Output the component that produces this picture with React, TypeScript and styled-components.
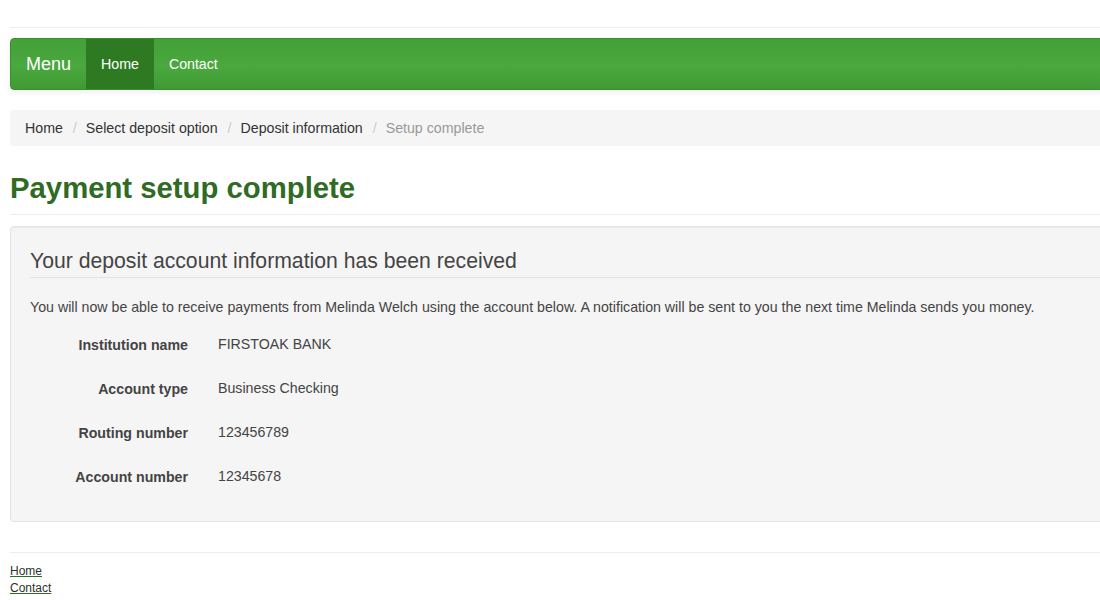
import React from "react";
import styled, { createGlobalStyle } from "styled-components";

const Global = createGlobalStyle`
  html, body { margin: 0; padding: 0; overflow-x: hidden; background: #fff; }
  body { font-family: "Liberation Sans", Arial, sans-serif; font-size: 14.2px; line-height: 20px; color: #333; }
  * { box-sizing: border-box; }
`;

const Page = styled.div`
  width: 1180px;
  margin-left: 10px;
`;

const TopHeader = styled.header`
  height: 28px;
  border-bottom: 1px solid #eee;
`;

const Navbar = styled.nav`
  margin-top: 10px;
  height: 52px;
  display: flex;
  align-items: stretch;
  border: 1px solid #3a8c2f;
  border-radius: 4px;
  background: linear-gradient(to bottom, #44a038 0%, #4aa83e 55%, #3f9a33 100%);
  box-shadow: 0 2px 6px rgba(0, 0, 0, 0.08);
  overflow: hidden;
`;

const Brand = styled.a`
  display: flex;
  align-items: center;
  padding: 0 15px;
  font-size: 18px;
  color: #fff;
  text-decoration: none;
`;

const NavItem = styled.a<{ $active?: boolean }>`
  display: flex;
  align-items: center;
  padding: 0 15px;
  font-size: 14.2px;
  color: #fff;
  text-decoration: none;
  background: ${(p) => (p.$active ? "#2e7a22" : "transparent")};
`;

const Breadcrumb = styled.ol`
  list-style: none;
  margin: 20px 0 0;
  padding: 8px 15px;
  height: 36px;
  display: flex;
  background: #f5f5f5;
  border-radius: 4px;
  & > li + li::before {
    content: "/";
    padding: 0 9px 0 10px;
    color: #ccc;
  }
`;

const Crumb = styled.li<{ $active?: boolean }>`
  color: ${(p) => (p.$active ? "#999" : "#333")};
`;

const PageHeader = styled.div`
  margin-top: 25px;
  padding-bottom: 10px;
  border-bottom: 1px solid #eee;
`;

const Title = styled.h1`
  margin: 0;
  font-size: 29.3px;
  line-height: 33px;
  font-weight: bold;
  color: #2f6b24;
`;

const Well = styled.section`
  margin-top: 11px;
  height: 296px;
  padding: 19px 19px;
  background: #f5f5f5;
  border: 1px solid #e3e3e3;
  border-radius: 4px;
  box-shadow: inset 0 1px 1px rgba(0, 0, 0, 0.05);
`;

const WellTitle = styled.h3`
  margin: 0;
  padding-top: 3px;
  padding-bottom: 4px;
  font-size: 21.2px;
  line-height: 24px;
  font-weight: normal;
  color: #444;
  border-bottom: 1px solid #e3e3e3;
`;

const Intro = styled.p`
  margin: 19px 0 0;
  color: #444;
`;

const Details = styled.dl`
  margin: 17px 0 0;
  display: grid;
  grid-template-columns: 158px 1fr;
  column-gap: 30px;
  row-gap: 23px;
`;

const Term = styled.dt`
  font-weight: bold;
  color: #444;
  text-align: right;
  line-height: 20px;
  padding-top: 1px;
`;

const Value = styled.dd`
  margin: 0;
  color: #444;
`;

const Footer = styled.footer`
  margin-top: 30px;
  border-top: 1px solid #eee;
  padding-top: 10px;
  display: flex;
  flex-direction: column;
`;

const FooterLink = styled.a`
  font-size: 12px;
  line-height: 17px;
  color: #2b3328;
  text-decoration: underline;
  text-decoration-color: #2f6b24;
  align-self: flex-start;
`;

const details: [string, string][] = [
  ["Institution name", "FIRSTOAK BANK"],
  ["Account type", "Business Checking"],
  ["Routing number", "123456789"],
  ["Account number", "12345678"],
];

export default function App() {
  return (
    <>
      <Global />
      <Page>
        <TopHeader />
        <Navbar>
          <Brand href="#">Menu</Brand>
          <NavItem href="#" $active>Home</NavItem>
          <NavItem href="#">Contact</NavItem>
        </Navbar>
        <Breadcrumb>
          <Crumb>Home</Crumb>
          <Crumb>Select deposit option</Crumb>
          <Crumb>Deposit information</Crumb>
          <Crumb $active>Setup complete</Crumb>
        </Breadcrumb>
        <PageHeader>
          <Title>Payment setup complete</Title>
        </PageHeader>
        <Well>
          <WellTitle>Your deposit account information has been received</WellTitle>
          <Intro>
            You will now be able to receive payments from Melinda Welch using the account below. A notification will be sent to you the next time Melinda sends you money.
          </Intro>
          <Details>
            {details.map(([k, v]) => (
              <React.Fragment key={k}>
                <Term>{k}</Term>
                <Value>{v}</Value>
              </React.Fragment>
            ))}
          </Details>
        </Well>
        <Footer>
          <FooterLink href="#">Home</FooterLink>
          <FooterLink href="#">Contact</FooterLink>
        </Footer>
      </Page>
    </>
  );
}
